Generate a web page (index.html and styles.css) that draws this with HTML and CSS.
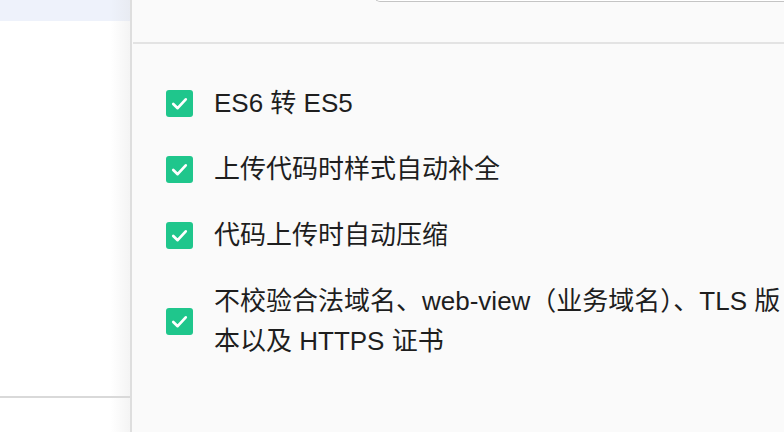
FILE: index.html
```html
<!DOCTYPE html>
<html lang="zh-CN">
<head>
    <meta charset="UTF-8">
    <meta name="viewport" content="width=device-width, initial-scale=1.0">
    <title>项目设置</title>
    <link rel="stylesheet" href="styles.css">
</head>
<body>
    <div class="page">
        <div class="sidebar">
            <div class="sidebar-top"></div>
            <div class="sidebar-body"></div>
            <div class="sidebar-foot"></div>
        </div>

        <div class="panel">
            <div class="panel-head">
                <div class="search"></div>
            </div>

            <ul class="options">
                <li class="option">
                    <span class="check"><svg viewBox="0 0 26 26"><polyline points="7,13.5 11.2,17.5 19,9"/></svg></span>
                    <span class="label">ES6 转 ES5</span>
                </li>
                <li class="option">
                    <span class="check"><svg viewBox="0 0 26 26"><polyline points="7,13.5 11.2,17.5 19,9"/></svg></span>
                    <span class="label">上传代码时样式自动补全</span>
                </li>
                <li class="option">
                    <span class="check"><svg viewBox="0 0 26 26"><polyline points="7,13.5 11.2,17.5 19,9"/></svg></span>
                    <span class="label">代码上传时自动压缩</span>
                </li>
                <li class="option">
                    <span class="check"><svg viewBox="0 0 26 26"><polyline points="7,13.5 11.2,17.5 19,9"/></svg></span>
                    <span class="label long">不校验合法域名、web-view（业务域名）、TLS 版<br>本以及 HTTPS 证书</span>
                </li>
            </ul>
        </div>
    </div>
</body>
</html>
```

FILE: styles.css
```css
*{
    box-sizing: border-box;
}

html, body{
    margin: 0;
    height: 100%;
    overflow: hidden;
}

body{
    font-family: "Liberation Sans", "Noto Sans CJK SC", sans-serif;
    color: #1e1e1e;
    background-color: #fafafa;
}

.page{
    display: flex;
    height: 100%;
}

.sidebar{
    width: 130px;
    flex-shrink: 0;
    display: flex;
    flex-direction: column;
    background: linear-gradient(to right, #ffffff 85%, #f4f4f4);
}

.sidebar-top{
    height: 21px;
    background: linear-gradient(to right, #eef2fb 85%, #e8ebf2);
}

.sidebar-body{
    height: 377px;
    border-bottom: 2px solid #d9d9d9;
}

.sidebar-foot{
    flex: 1;
}

.panel{
    flex: 1;
    border-left: 2px solid #dedede;
    background-color: #fafafa;
    overflow: hidden;
}

/* the search box is scrolled mostly out of view */
.panel-head{
    display: flex;
    align-items: flex-start;
    height: 44px;
    margin-left: 1px;
    border-bottom: 2px solid #e3e3e3;
    padding-left: 242px;
}

.search{
    flex: 1;
    height: 30px;
    margin-top: -28px;
    border: 1px solid #c4c4c4;
    border-right: none;
    border-radius: 0 0 0 5px;
    background-color: #ffffff;
}

.options{
    list-style: none;
    margin: 0;
    padding: 39px 0 0 34px;
    display: flex;
    flex-direction: column;
    gap: 26px;
}

.option{
    display: flex;
    align-items: center;
    gap: 21px;
}

.check{
    width: 27px;
    height: 27px;
    flex-shrink: 0;
    border-radius: 3px;
    background-color: #1fc68c;
    display: flex;
}

.check svg{
    width: 27px;
    height: 27px;
    fill: none;
    stroke: #ffffff;
    stroke-width: 2.6;
    stroke-linecap: round;
    stroke-linejoin: round;
}

.label{
    font-size: 26px;
    line-height: 40px;
}

.long{
    white-space: nowrap;
}
```
